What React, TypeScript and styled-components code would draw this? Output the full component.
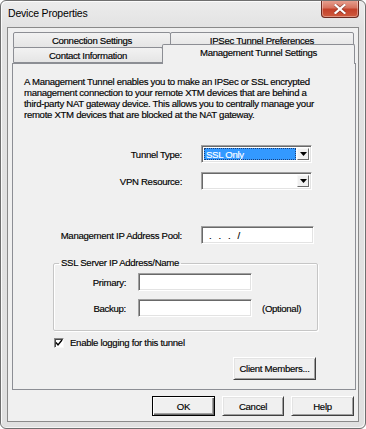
import React from 'react';
import styled, { createGlobalStyle } from 'styled-components';

const GlobalStyle = createGlobalStyle`
  html, body {
    margin: 0;
    padding: 0;
    background: #ffffff;
  }
  body {
    font-family: 'Liberation Sans', Arial, sans-serif;
    font-size: 9.6px;
    letter-spacing: -0.3px;
    color: #000;
    -webkit-text-stroke: 0.15px #000;
  }
`;

// Window frame
const Window = styled.div`
  box-sizing: border-box;
  width: 366px;
  height: 429px;
  display: flex;
  flex-direction: column;
  border: 1px solid #6f6f6f;
  border-radius: 6px;
  background: linear-gradient(#ececec 0, #e2e2e2 28px, #e0e0e0 100%);
  box-shadow: inset 1px 1px 0 #fbfbfb, inset -1px -1px 0 #f4f4f4;
  overflow: hidden;
`;

const TitleBar = styled.div`
  height: 26px;
  display: flex;
  align-items: flex-start;
  justify-content: space-between;
  padding-left: 7px;
  flex-shrink: 0;
`;

const TitleText = styled.div`
  font-size: 10.5px;
  line-height: 12px;
  margin-top: 6px;
  color: #000;
  letter-spacing: -0.2px;
  -webkit-text-stroke: 0;
`;

const CloseButton = styled.div`
  box-sizing: border-box;
  width: 38px;
  height: 18px;
  margin-right: 6px;
  margin-top: -1px;
  border: 1px solid #6b2a20;
  border-top: none;
  border-radius: 0 0 4px 4px;
  background: linear-gradient(#e8a494 0, #d7735f 45%, #c4412a 55%, #cf5b3e 100%);
  box-shadow: inset 0 0 0 1px rgba(255, 255, 255, 0.35);
  display: flex;
  align-items: center;
  justify-content: center;
`;

const Client = styled.div`
  flex: 1;
  margin: 0 6px 6px 6px;
  border: 1px solid #8a8a8a;
  background: #f0f0f0;
  display: flex;
  flex-direction: column;
  padding: 5px 3px 0 4px;
`;

// Tabs
const TabRow = styled.div<{ $indent: number }>`
  display: flex;
  padding-left: ${p => p.$indent}px;
  height: 15px;
  align-items: flex-end;
  position: relative;
`;

const Tab = styled.div<{ $w: number; $selected?: boolean }>`
  box-sizing: border-box;
  width: ${p => p.$w}px;
  height: ${p => (p.$selected ? 20 : 16)}px;
  margin-bottom: ${p => (p.$selected ? -1 : 0)}px;
  border: 1px solid #8c8e94;
  border-bottom: ${p => (p.$selected ? 'none' : '1px solid #8c8e94')};
  border-radius: 2px 2px 0 0;
  background: ${p => (p.$selected ? '#f0f0f0' : 'linear-gradient(#f2f2f2, #e5e5e5)')};
  display: flex;
  justify-content: center;
  align-items: ${p => (p.$selected ? 'flex-start' : 'center')};
  padding-top: ${p => (p.$selected ? 2 : 0)}px;
  white-space: nowrap;
  position: relative;
  z-index: ${p => (p.$selected ? 2 : 1)};
  & + & {
    margin-left: -1px;
  }
`;

const Panel = styled.div`
  box-sizing: border-box;
  width: 344px;
  height: 327px;
  border: 1px solid #8c8e94;
  background: #f0f0f0;
  position: relative;
  z-index: 1;
  padding: 12px 0 0 11px;
  display: flex;
  flex-direction: column;
`;

const Description = styled.p`
  margin: 0;
  line-height: 11px;
  white-space: nowrap;
`;

// Form rows
const FieldRow = styled.div<{ $top: number }>`
  display: flex;
  align-items: center;
  margin-top: ${p => p.$top}px;
`;

const FieldLabel = styled.div<{ $w: number; $gap: number }>`
  width: ${p => p.$w}px;
  margin-right: ${p => p.$gap}px;
  text-align: right;
  white-space: nowrap;
`;

const Combo = styled.div`
  box-sizing: border-box;
  width: 111px;
  height: 18px;
  border: 1px solid;
  border-color: #a0a0a0 #ffffff #ffffff #a0a0a0;
  box-shadow: inset 1px 1px 0 #696969, inset -1px -1px 0 #e3e3e3;
  background: #fff;
  display: flex;
  align-items: stretch;
  padding: 2px;
`;

const ComboValue = styled.div<{ $selected?: boolean }>`
  flex: 1;
  background: ${p => (p.$selected ? '#3399ff' : 'transparent')};
  color: #fff;
  -webkit-text-stroke: 0.15px #fff;
  padding-left: 2px;
  display: flex;
  align-items: center;
  margin-right: 1px;
  outline: ${p => (p.$selected ? '1px dotted #1c3f78' : 'none')};
  outline-offset: -1px;
`;

const ComboArrow = styled.div`
  box-sizing: border-box;
  width: 12px;
  background: #f0f0f0;
  border: 1px solid;
  border-color: #f8f8f8 #6a6a6a #6a6a6a #f8f8f8;
  display: flex;
  align-items: center;
  justify-content: center;
`;

const TextBox = styled.div<{ $w: number }>`
  box-sizing: border-box;
  width: ${p => p.$w}px;
  height: 18px;
  border: 1px solid;
  border-color: #a0a0a0 #ffffff #ffffff #a0a0a0;
  box-shadow: inset 1px 1px 0 #696969, inset -1px -1px 0 #e3e3e3;
  background: #fff;
  display: flex;
  align-items: center;
  padding-left: 7px;
  letter-spacing: 0.5px;
`;

// Group box
const GroupBox = styled.fieldset`
  box-sizing: border-box;
  width: 265px;
  height: 73px;
  margin: 14px 0 0 29px;
  padding: 4px 0 0 0;
  border: 1px solid #c6c6c6;
  box-shadow: 1px 1px 0 #ffffff, inset 1px 1px 0 #ffffff;
  border-radius: 2px;
  display: flex;
  flex-direction: column;
  min-width: 0;
`;

const Legend = styled.legend`
  padding: 0 2px;
  margin-left: 5px;
  line-height: 10px;
`;

const Hint = styled.span`
  margin-left: 10px;
`;

const CheckRow = styled.label`
  display: flex;
  align-items: center;
  margin: 6px 0 0 30px;
  gap: 6px;
`;

const CheckBox = styled.span`
  box-sizing: border-box;
  width: 10px;
  height: 10px;
  border: 1px solid;
  border-color: #8a8a8a #f8f8f8 #f8f8f8 #8a8a8a;
  box-shadow: inset 1px 1px 0 #4a4a4a;
  background: #fff;
  display: flex;
  align-items: center;
  justify-content: center;
`;

const Button = styled.button<{ $w: number; $h?: number; $default?: boolean }>`
  box-sizing: border-box;
  width: ${p => p.$w}px;
  height: ${p => p.$h ?? 20}px;
  padding: 0;
  font-family: 'Liberation Sans', Arial, sans-serif;
  font-size: 9.6px;
  letter-spacing: -0.3px;
  -webkit-text-stroke: 0.15px #000;
  color: #000;
  background: #f0f0f0;
  border: 1px solid;
  border-color: ${p => (p.$default ? '#000' : '#ffffff #404040 #404040 #ffffff')};
  box-shadow: ${p =>
    p.$default
      ? 'inset 1px 1px 0 #ffffff, inset -1px -1px 0 #696969, inset -2px -2px 0 #a0a0a0'
      : 'inset 1px 1px 0 #e3e3e3, inset -1px -1px 0 #a0a0a0'};
  cursor: default;
`;

const ClientButtonRow = styled.div`
  display: flex;
  justify-content: flex-end;
  padding-right: 39px;
  margin-top: 9px;
`;

const DialogButtons = styled.div`
  display: flex;
  justify-content: flex-end;
  gap: 7px;
  padding-right: 1px;
  margin-top: 6px;
`;

const DropArrow = () => (
  <svg width="7" height="4" viewBox="0 0 7 4">
    <path d="M0 0h7L3.5 4z" fill="#000" />
  </svg>
);

const App: React.FC = () => {
  return (
    <>
      <GlobalStyle />
      <Window>
        <TitleBar>
          <TitleText>Device Properties</TitleText>
          <CloseButton>
            <svg width="12" height="10" viewBox="0 0 12 10">
              <path
                d="M1.5 1 L10.5 9 M10.5 1 L1.5 9"
                stroke="#5a1a10"
                strokeWidth="3.4"
                strokeLinecap="square"
                opacity="0.6"
              />
              <path
                d="M1.5 1 L10.5 9 M10.5 1 L1.5 9"
                stroke="#ffffff"
                strokeWidth="2.2"
                strokeLinecap="square"
              />
            </svg>
          </CloseButton>
        </TitleBar>
        <Client>
          <TabRow $indent={1}>
            <Tab $w={158}>Connection Settings</Tab>
            <Tab $w={184}>IPSec Tunnel Preferences</Tab>
          </TabRow>
          <TabRow $indent={1}>
            <Tab $w={150}>Contact Information</Tab>
            <Tab $w={193} $selected>Management Tunnel Settings</Tab>
          </TabRow>
          <Panel>
            <Description>
              A Management Tunnel enables you to make an IPSec or SSL encrypted
              <br />
              management connection to your remote XTM devices that are behind a
              <br />
              third-party NAT gateway device. This allows you to centrally manage your
              <br />
              remote XTM devices that are blocked at the NAT gateway.
            </Description>

            <FieldRow $top={25}>
              <FieldLabel $w={158} $gap={19}>Tunnel Type:</FieldLabel>
              <Combo>
                <ComboValue $selected>SSL Only</ComboValue>
                <ComboArrow>
                  <DropArrow />
                </ComboArrow>
              </Combo>
            </FieldRow>

            <FieldRow $top={9}>
              <FieldLabel $w={158} $gap={19}>VPN Resource:</FieldLabel>
              <Combo>
                <ComboValue />
                <ComboArrow>
                  <DropArrow />
                </ComboArrow>
              </Combo>
            </FieldRow>

            <FieldRow $top={36}>
              <FieldLabel $w={158} $gap={19}>Management IP Address Pool:</FieldLabel>
              <TextBox $w={113}>.&nbsp;&nbsp;.&nbsp;&nbsp;.&nbsp;&nbsp;/</TextBox>
            </FieldRow>

            <GroupBox>
              <Legend>SSL Server IP Address/Name</Legend>
              <FieldRow $top={1}>
                <FieldLabel $w={72} $gap={12}>Primary:</FieldLabel>
                <TextBox $w={114} />
              </FieldRow>
              <FieldRow $top={8}>
                <FieldLabel $w={72} $gap={12}>Backup:</FieldLabel>
                <TextBox $w={114} />
                <Hint>(Optional)</Hint>
              </FieldRow>
            </GroupBox>

            <CheckRow>
              <CheckBox>
                <svg width="8" height="8" viewBox="0 0 8 8">
                  <path d="M1 3.5 L3 6 L7 1" stroke="#000" strokeWidth="1.4" fill="none" />
                </svg>
              </CheckBox>
              Enable logging for this tunnel
            </CheckRow>

            <ClientButtonRow>
              <Button $w={83} $h={23}>Client Members...</Button>
            </ClientButtonRow>
          </Panel>
          <DialogButtons>
            <Button $w={63} $default>OK</Button>
            <Button $w={62}>Cancel</Button>
            <Button $w={63}>Help</Button>
          </DialogButtons>
        </Client>
      </Window>
    </>
  );
};

export default App;
